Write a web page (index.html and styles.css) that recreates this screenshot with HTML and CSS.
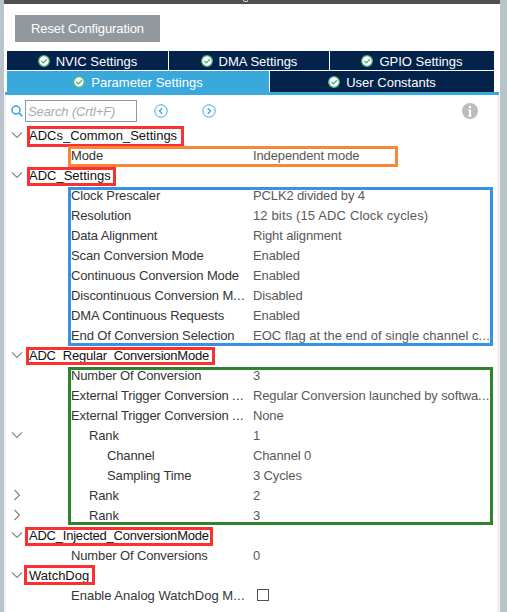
FILE: index.html
```html
<!DOCTYPE html>
<html lang="en">
<head>
<meta charset="utf-8">
<title>ADC Configuration</title>
<link rel="stylesheet" href="styles.css">
</head>
<body>
<svg class="defs" width="0" height="0">
  <symbol id="check" viewBox="0 0 12 12"><circle cx="6" cy="6" r="5.3" fill="#fff" stroke="#58b57c" stroke-width="1.3"/><path d="M3.2 5.9 5.3 8 9 4.2" fill="none" stroke="#45a86b" stroke-width="1.2"/></symbol>
  <symbol id="down" viewBox="0 0 12 8"><path d="M1 1.3 6 6.3 11 1.3" fill="none" stroke="#858585" stroke-width="1.2"/></symbol>
  <symbol id="right" viewBox="0 0 8 12"><path d="M1.5 1 6.5 6 1.5 11" fill="none" stroke="#858585" stroke-width="1.2"/></symbol>
</svg>
<div class="window">
  <div class="titlebar"><i></i></div>
  <div class="actions"><button class="reset">Reset Configuration</button></div>
  <nav class="tabs">
    <div class="tabrow top">
      <div class="tab"><svg><use href="#check"/></svg><span>NVIC Settings</span></div>
      <div class="tab"><svg><use href="#check"/></svg><span>DMA Settings</span></div>
      <div class="tab"><svg><use href="#check"/></svg><span>GPIO Settings</span></div>
    </div>
    <div class="tabrow bottom">
      <div class="tab active"><svg><use href="#check"/></svg><span>Parameter Settings</span></div>
      <div class="tab"><svg><use href="#check"/></svg><span>User Constants</span></div>
    </div>
  </nav>
  <main class="panel">
    <div class="toolbar">
      <svg class="magnifier" viewBox="0 0 12 12"><circle cx="5" cy="5" r="4" fill="none" stroke="#32a2da" stroke-width="1.5"/><path d="M8 8 11.2 11.2" stroke="#32a2da" stroke-width="1.7"/></svg>
      <div class="search">Search (Crtl+F)</div>
      <svg class="prev" viewBox="0 0 14 14"><circle cx="7" cy="7" r="6.2" fill="none" stroke="#36a7dd"/><path d="M8.2 4.2 5.5 7 8.2 9.8" fill="none" stroke="#36a7dd" stroke-width="1.3"/></svg>
      <svg class="next" viewBox="0 0 14 14"><circle cx="7" cy="7" r="6.2" fill="none" stroke="#36a7dd"/><path d="M5.8 4.2 8.5 7 5.8 9.8" fill="none" stroke="#36a7dd" stroke-width="1.3"/></svg>
      <svg class="info" viewBox="0 0 16 16"><circle cx="8" cy="8" r="8" fill="#bdbdbd"/><path d="M7 3h2v2H7zM6 6.5h3v6h1v1H6v-1h1v-5H6z" fill="#fff"/></svg>
    </div>
    <div class="tree">
      <div class="row group"><svg class="down"><use href="#down"/></svg><span class="wide">ADCs_Common_Settings</span></div>
      <div class="row"><span class="name">Mode</span><span class="value">Independent mode</span></div>
      <div class="row group"><svg class="down"><use href="#down"/></svg><span class="wide">ADC_Settings</span></div>
      <div class="row"><span class="name">Clock Prescaler</span><span class="value">PCLK2 divided by 4</span></div>
      <div class="row"><span class="name">Resolution</span><span class="value wide">12 bits (15 ADC Clock cycles)</span></div>
      <div class="row"><span class="name">Data Alignment</span><span class="value">Right alignment</span></div>
      <div class="row"><span class="name">Scan Conversion Mode</span><span class="value">Enabled</span></div>
      <div class="row"><span class="name">Continuous Conversion Mode</span><span class="value">Enabled</span></div>
      <div class="row"><span class="name">Discontinuous Conversion M<span class="dots">...</span></span><span class="value">Disabled</span></div>
      <div class="row"><span class="name">DMA Continuous Requests</span><span class="value">Enabled</span></div>
      <div class="row"><span class="name">End Of Conversion Selection</span><span class="value snug">EOC flag at the end of single channel c<span class="dots">...</span></span></div>
      <div class="row group"><svg class="down"><use href="#down"/></svg><span>ADC_Regular_ConversionMode</span></div>
      <div class="row"><span class="name">Number Of Conversion</span><span class="value">3</span></div>
      <div class="row"><span class="name">External Trigger Conversion <span class="dots">...</span></span><span class="value">Regular Conversion launched by softwa<span class="dots">...</span></span></div>
      <div class="row"><span class="name">External Trigger Conversion <span class="dots">...</span></span><span class="value">None</span></div>
      <div class="row"><svg class="down"><use href="#down"/></svg><span class="name level2">Rank</span><span class="value">1</span></div>
      <div class="row"><span class="name level3">Channel</span><span class="value">Channel 0</span></div>
      <div class="row"><span class="name level3">Sampling Time</span><span class="value">3 Cycles</span></div>
      <div class="row"><svg class="right"><use href="#right"/></svg><span class="name level2">Rank</span><span class="value">2</span></div>
      <div class="row"><svg class="right"><use href="#right"/></svg><span class="name level2">Rank</span><span class="value">3</span></div>
      <div class="row group"><svg class="down"><use href="#down"/></svg><span>ADC_Injected_ConversionMode</span></div>
      <div class="row"><span class="name">Number Of Conversions</span><span class="value">0</span></div>
      <div class="row group"><svg class="down"><use href="#down"/></svg><span class="wide">WatchDog</span></div>
      <div class="row"><span class="name snug">Enable Analog WatchDog M<span class="dots">...</span></span><span class="value"><i class="checkbox"></i></span></div>
    </div>
  </main>
</div>
<div class="mark red common"></div>
<div class="mark orange"></div>
<div class="mark red settings"></div>
<div class="mark blue"></div>
<div class="mark red regular"></div>
<div class="mark green"></div>
<div class="mark red injected"></div>
<div class="mark red watchdog"></div>
</body>
</html>
```
FILE: styles.css
```css
* { box-sizing: border-box; }
body {
  margin: 0;
  width: 507px;
  height: 612px;
  overflow: hidden;
  position: relative;
  background: #b8c3ca;
  font: 13px/20px "Liberation Sans", Arial, sans-serif;
  letter-spacing: -0.13px;
  white-space: nowrap;
}
svg { display: block; flex: none; }
.defs { position: absolute; }
.window { width: 496px; height: 612px; margin-left: 4px; background: #fff; }
.titlebar { height: 4px; background: #505050; padding-left: 239px; }
.titlebar i { display: block; width: 5px; height: 2px; border: 1px solid #ddd; border-top: 0; border-radius: 0 0 3px 3px; }
.actions { height: 47px; padding: 11px 0 0 11px; }
.reset {
  display: block;
  width: 145px;
  height: 27px;
  padding: 0;
  border: 0;
  background: #91989e;
  color: #fff;
  font: inherit;
  letter-spacing: -0.1px;
}
.tabs { height: 44px; border-bottom: 3px solid #39a9dc; margin: 0 1px; padding: 0 4px 0 2px; }
.tabrow { display: grid; column-gap: 1px; }
.top { grid-template-columns: 161px 160px 164px; height: 19px; margin-bottom: 1px; }
.bottom { grid-template-columns: 262px 224px; height: 21px; }
.tab { display: flex; align-items: center; justify-content: center; gap: 6px; background: #03234b; color: #fff; letter-spacing: 0; line-height: 17px; padding-top: 1px; }
.tab span { padding-top: 1px; }
.tab svg { width: 12px; height: 12px; }
.active { background: #39a9dc; }
.panel { height: 517px; border-left: 2px solid #f0f0f0; border-right: 3px solid #f0f0f0; }
.toolbar { display: flex; align-items: center; height: 30px; padding: 2px 12px 0 5px; }
.magnifier { width: 12px; height: 12px; margin-right: 2px; }
.search { width: 112px; height: 22px; border: 1px solid #91989e; padding-left: 2px; line-height: 22px; color: #aaa; font-style: italic; }
.prev { width: 14px; height: 14px; margin-left: 17px; }
.next { width: 14px; height: 14px; margin-left: 34px; }
.info { width: 16px; height: 16px; margin-left: auto; margin-right: 7px; }
.row { display: grid; grid-template-columns: 23px 42px 182px 240px; grid-template-rows: 20px; height: 20px; line-height: 22px; align-items: center; color: #595959; }
.row svg { grid-column: 1; grid-row: 1; }
.down { width: 12px; height: 8px; margin-left: 5px; }
.right { width: 8px; height: 12px; margin-left: 7px; }
.row > span { align-self: start; }
.group span { grid-column: 2; grid-row: 1; color: #111; letter-spacing: -0.22px; }
.group .wide { letter-spacing: 0; }
.name { grid-column: 3; grid-row: 1; color: #353535; }
.level2 { padding-left: 18px; }
.level3 { padding-left: 36px; }
.value { grid-column: 4; grid-row: 1; }
.value.wide { letter-spacing: 0.14px; }
.snug { letter-spacing: 0; }
.dots { letter-spacing: 0.3px; }
.checkbox { display: block; width: 12px; height: 12px; margin: 4px 0 0 4px; border: 1px solid #505050; }
.mark { position: absolute; border: 3px solid; }
.red { border-color: #fb3030; }
.common { left: 27px; top: 126px; width: 157px; height: 21px; }
.orange { left: 68px; top: 146px; width: 330px; height: 21px; border-color: #f88838; }
.settings { left: 27px; top: 167px; width: 89px; height: 19px; }
.blue { left: 68px; top: 187px; width: 425px; height: 159px; border-color: #3593e5; }
.regular { left: 26px; top: 347px; width: 189px; height: 18px; }
.green { left: 68px; top: 367px; width: 425px; height: 158px; border-color: #2e842e; }
.injected { left: 25px; top: 527px; width: 188px; height: 19px; }
.watchdog { left: 24px; top: 565px; width: 71px; height: 20px; }
```
